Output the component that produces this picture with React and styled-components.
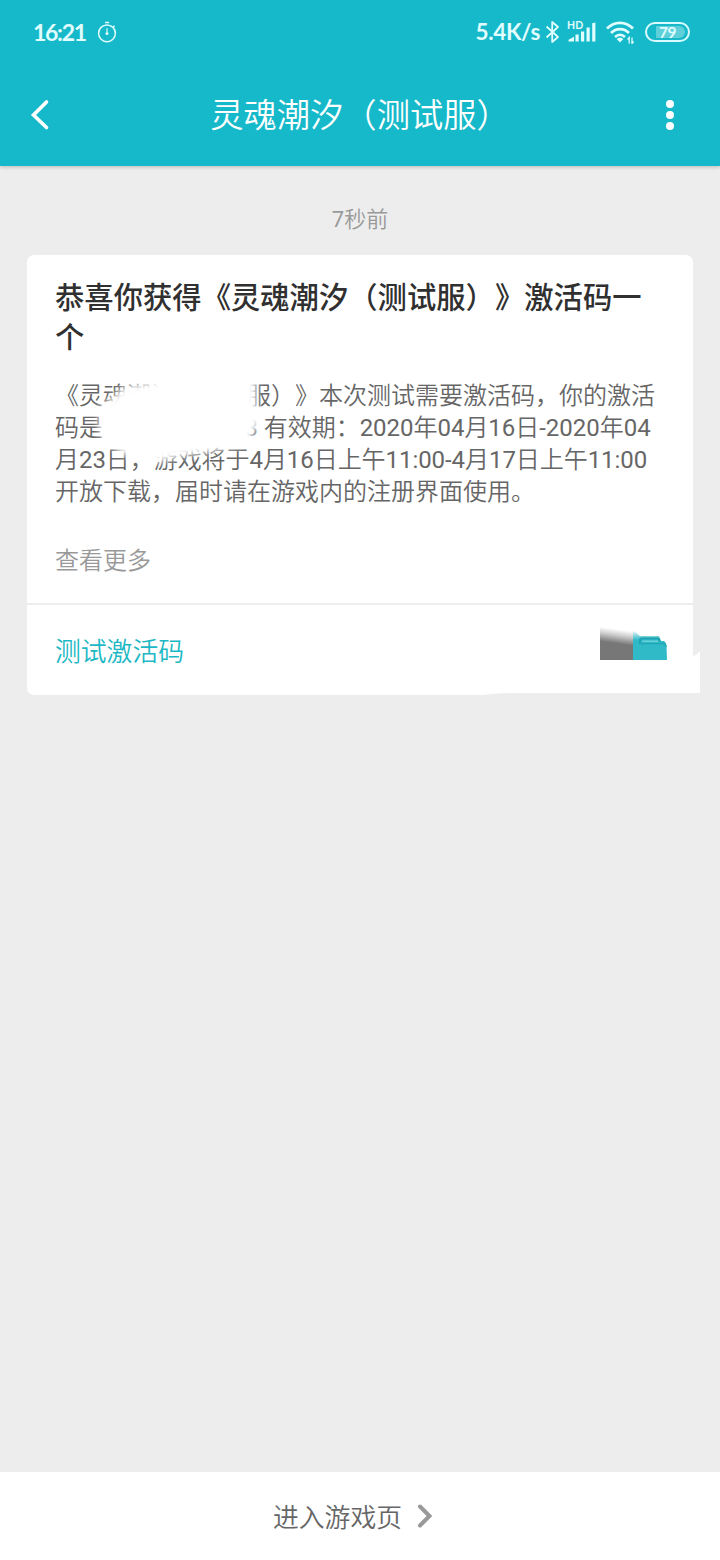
import React from 'react';
import styled, { createGlobalStyle } from 'styled-components';

const GlobalStyle = createGlobalStyle`
  * {
    box-sizing: border-box;
  }

  body {
    margin: 0;
    background-color: #ededed;
    font-family: Roboto, 'Noto Sans CJK SC', sans-serif;
    font-weight: 350;
    text-spacing-trim: space-all;
  }
`;

const Page = styled.div`
  display: flex;
  flex-direction: column;
  width: 720px;
  height: 1560px;
  overflow: hidden;
  background-color: #ededed;
`;

const Header = styled.header`
  height: 166px;
  flex-shrink: 0;
  color: #fff;
  background-color: #16b9c9;
  box-shadow: 0 1px 4px rgba(0, 0, 0, 0.22);
`;

const StatusBar = styled.div`
  display: flex;
  align-items: center;
  height: 64px;
  padding: 0 30px 0 33px;
  color: #e0fdff;
`;

const StatusText = styled.span`
  font-family: Lato, sans-serif;
  font-size: ${(props) => props.$size}px;
  font-weight: 700;
  line-height: ${(props) => props.$line || 30}px;
  letter-spacing: ${(props) => props.$spacing}px;
`;

const StatusIcons = styled.div`
  display: flex;
  align-items: center;
  margin-left: auto;
`;

const Icon = styled.svg`
  display: block;
  flex-shrink: 0;
  margin-left: ${(props) => props.$left || 0}px;
`;

const Signal = styled.div`
  display: flex;
  position: relative;
  margin-left: 8px;
`;

const HdLabel = styled.span`
  position: absolute;
  top: -2px;
  left: -1px;
  font-family: Lato, sans-serif;
  font-size: 10.5px;
  font-weight: 700;
  line-height: 10px;
  letter-spacing: 0.2px;
`;

const Battery = styled.div`
  display: flex;
  align-items: center;
  width: 45px;
  height: 20px;
  margin-left: 10px;
  padding: 2px 3px;
  border: 2px solid #d9fbfd;
  border-radius: 10px;
`;

const BatteryLevel = styled.div`
  display: flex;
  align-items: center;
  justify-content: center;
  width: 29px;
  height: 12px;
  margin-left: auto;
  padding-right: 6px;
  border-radius: 0 6px 6px 0;
  background-color: #5fd0da;
  font-family: Lato, sans-serif;
  font-size: 15.5px;
  font-weight: 700;
  letter-spacing: -0.4px;
`;

const NavBar = styled.div`
  display: flex;
  align-items: center;
  justify-content: space-between;
  height: 102px;
  padding: 0 45px 0 30px;
`;

const NavTitle = styled.h1`
  margin: 1px 0 0;
  padding-left: 5px;
  font-size: 33.3px;
  font-weight: 350;
  line-height: 48px;
`;

const Content = styled.main`
  display: flex;
  flex: 1;
  flex-direction: column;
  padding: 37px 27px 0;
`;

const Time = styled.div`
  color: #999;
  font-size: 22px;
  line-height: 33px;
  text-align: center;
`;

const Card = styled.section`
  position: relative;
  height: 440px;
  margin-top: 19px;
  border-radius: 7px;
  background-color: #fff;
`;

const CardBody = styled.div`
  height: 350px;
  padding: 23px 28px 0;
  border-bottom: 2px solid #eee;
`;

const CardTitle = styled.h2`
  margin: 0;
  color: #303030;
  font-size: 29.33px;
  font-weight: 500;
  line-height: 40px;
`;

const Message = styled.div`
  position: relative;
  margin-top: 22px;
  color: #666;
  font-size: 24px;
  line-height: 32px;
`;

const Line = styled.div`
  height: 32px;
  letter-spacing: ${(props) => props.$spacing || 0}px;
  white-space: pre;
`;

// Roboto needs its regular weight next to the lighter Chinese glyphs
const Latin = styled.span`
  font-weight: 400;
`;

const CodeGap = styled.span`
  display: inline-block;
  width: 141.5px;
`;

const Smudge = styled.svg`
  position: absolute;
  top: ${(props) => props.$top}px;
  left: ${(props) => props.$left}px;
`;

const More = styled.div`
  margin-top: 37px;
  color: #999;
  font-size: 24px;
  line-height: 32px;
`;

const CardFooter = styled.div`
  display: flex;
  justify-content: space-between;
  height: 90px;
  padding: 19px 26px 0 28px;
`;

const CodeLink = styled.span`
  margin-top: 4px;
  color: #1db8c5;
  font-size: 25.8px;
  line-height: 48px;
`;

const BottomBar = styled.footer`
  display: flex;
  align-items: center;
  justify-content: center;
  height: 88px;
  flex-shrink: 0;
  padding-right: 13px;
  background-color: #fff;
`;

const BottomText = styled.span`
  margin-top: 3px;
  color: #666;
  font-size: 25.8px;
  line-height: 40px;
`;

const TextRun = ({ text }) =>
  text
    .split(/([0-9:-]+)/)
    .map((part, index) => (index % 2 ? <Latin key={index}>{part}</Latin> : part));

const TimerIcon = () => (
  <Icon $left={11} width="20" height="22" viewBox="0 0 20 22" fill="none" stroke="currentColor">
    <circle cx="10" cy="12.3" r="8.4" strokeWidth="1.5" />
    <path d="M8 1.6h4.2M16.4 4.8l1.2 1.3" strokeWidth="1.5" />
    <path d="M10 7.2v4" strokeWidth="1.2" />
    <circle cx="10" cy="12.4" r="1.5" fill="currentColor" stroke="none" />
  </Icon>
);

const BluetoothIcon = () => (
  <Icon $left={5} width="15" height="24" viewBox="0 0 15 24" fill="none" stroke="currentColor" strokeWidth="1.8">
    <path d="M1.5 6.5L13 17L7.2 22V2L13 7L1.5 17.5" strokeLinejoin="round" />
  </Icon>
);

const SignalIcon = () => (
  <Signal>
    <HdLabel>HD</HdLabel>
    <Icon width="28" height="20" viewBox="0 0 28 20" fill="currentColor">
      <path d="M.5 19.5v-1.7l5.5-3v4.7zM7.5 12.5h3.2v7H7.5zM13 9.5h3.2v10H13zM18.5 5.5h3.2v14h-3.2zM24.2 1.2l3.2-.7v19h-3.2z" />
    </Icon>
  </Signal>
);

const WifiIcon = () => (
  <Icon $left={10} width="29" height="23" viewBox="0 0 29 23" fill="none" stroke="currentColor">
    <path d="M1 7.5C8.5 0 19.5 0 27 7.5" strokeWidth="2.8" />
    <path d="M5 12C10.2 6.8 17.8 6.8 23 12" strokeWidth="2.8" />
    <path d="M9 16C12 13 16 13 19 16" strokeWidth="2.6" />
    <path d="M10.7 18C12.8 16 15.2 16 17.3 18L14 21.5z" fill="currentColor" stroke="none" />
    <path d="M23.2 22.5v-6l-1.6 2M26 16.5v6l1.6-2" strokeWidth="1.3" />
  </Icon>
);

// White brush strokes that hide the activation code
const CodeSmudge = () => (
  <Smudge $top={-9} $left={36} width="180" height="104" viewBox="0 0 180 104">
    <defs>
      <filter id="soft" x="-20%" y="-20%" width="140%" height="140%">
        <feGaussianBlur stdDeviation="3.5" />
      </filter>
    </defs>
    <path
      d="M22 26L34 15L62 11L76 4L84 -6H158L165 12L165 36L169 42L168 54L163 61L158 74L132 78L112 82L92 85L76 89L64 92L52 90L42 86L32 84L14 70L8 60V36L16 31Z"
      fill="#fff"
      filter="url(#soft)"
    />
    <path d="M76 6H156V68H76z" fill="#fff" />
  </Smudge>
);

const FolderIcon = () => (
  <Icon width="67" height="36" viewBox="0 0 67 36">
    <defs>
      <linearGradient id="fade" gradientUnits="userSpaceOnUse" x1="2" y1="3" x2="0" y2="17">
        <stop offset="0" stopColor="#777" stopOpacity="0" />
        <stop offset="0.45" stopColor="#777" stopOpacity="0.4" />
        <stop offset="1" stopColor="#777" />
      </linearGradient>
      <linearGradient id="tealFade" gradientUnits="userSpaceOnUse" x1="0" y1="6" x2="0" y2="16">
        <stop offset="0" stopColor="#30b9c7" stopOpacity="0" />
        <stop offset="1" stopColor="#30b9c7" />
      </linearGradient>
    </defs>
    <path d="M0 0H33V36H0z" fill="url(#fade)" />
    <path d="M33 6L40 12H59L61 17H64Q66 18 66.5 22L67 36H33z" fill="url(#tealFade)" />
    <path d="M40 20V16Q40 14.5 41.5 14.5H58Q59.5 14.5 59.5 17.5" fill="none" stroke="#1ba3b1" strokeWidth="1.8" />
    <path d="M42.5 17.3H58" stroke="#6bd1db" strokeWidth="1.6" />
    <path d="M42 21Q42 19.5 43.5 19.5H63Q65.5 19.5 66 23" fill="none" stroke="#22a8b6" strokeWidth="1.6" />
  </Icon>
);

// Leftover of the brush past the card's lower right corner
const CornerSmudge = () => (
  <Smudge $top={396} $left={453} width="222" height="46" viewBox="0 0 222 46">
    <path d="M211 6Q216 5 220 0V42H211z" fill="#fff" />
    <path d="M0 44.5Q15 42 35 42H222V46H0z" fill="#ededed" />
  </Smudge>
);

const App = () => {
  return (
    <>
      <GlobalStyle />
      <Page>
        <Header>
          <StatusBar>
            <StatusText $size={23} $spacing={-1.3}>16:21</StatusText>
            <TimerIcon />
            <StatusIcons>
              <StatusText $size={22.5} $spacing={-0.3} $line={32}>5.4K/s</StatusText>
              <BluetoothIcon />
              <SignalIcon />
              <WifiIcon />
              <Battery>
                <BatteryLevel>79</BatteryLevel>
              </Battery>
            </StatusIcons>
          </StatusBar>
          <NavBar>
            <Icon width="20" height="32" viewBox="0 0 20 32" fill="none" stroke="#fff" strokeWidth="3.6">
              <path d="M16.5 3L3.5 16L16.5 28.5" strokeLinecap="round" />
            </Icon>
            <NavTitle>灵魂潮汐（测试服）</NavTitle>
            <Icon width="10" height="32" viewBox="0 0 10 32" fill="#fff">
              <circle cx="5" cy="5" r="4" />
              <circle cx="5" cy="16" r="4" />
              <circle cx="5" cy="27" r="4" />
            </Icon>
          </NavBar>
        </Header>
        <Content>
          <Time>
            <TextRun text="7秒前" />
          </Time>
          <Card>
            <CardBody>
              <CardTitle>恭喜你获得《灵魂潮汐（测试服）》激活码一个</CardTitle>
              <Message>
                <Line>《灵魂潮汐（测试服）》本次测试需要激活码，你的激活</Line>
                <Line $spacing={-0.03}>
                  码是
                  <CodeGap />
                  <TextRun text="3 有效期：2020年04月16日-2020年04" />
                </Line>
                <Line $spacing={-0.06}>
                  <TextRun text="月23日，游戏将于4月16日上午11:00-4月17日上午11:00" />
                </Line>
                <Line>开放下载，届时请在游戏内的注册界面使用。</Line>
                <CodeSmudge />
              </Message>
              <More>查看更多</More>
            </CardBody>
            <CardFooter>
              <CodeLink>测试激活码</CodeLink>
              <FolderIcon />
            </CardFooter>
            <CornerSmudge />
          </Card>
        </Content>
        <BottomBar>
          <BottomText>进入游戏页</BottomText>
          <Icon $left={14} width="18" height="26" viewBox="0 0 18 26" fill="none" stroke="#999" strokeWidth="4">
            <path d="M4 3.5L13.5 13L4 22.5" strokeLinecap="round" />
          </Icon>
        </BottomBar>
      </Page>
    </>
  );
};

export default App;
